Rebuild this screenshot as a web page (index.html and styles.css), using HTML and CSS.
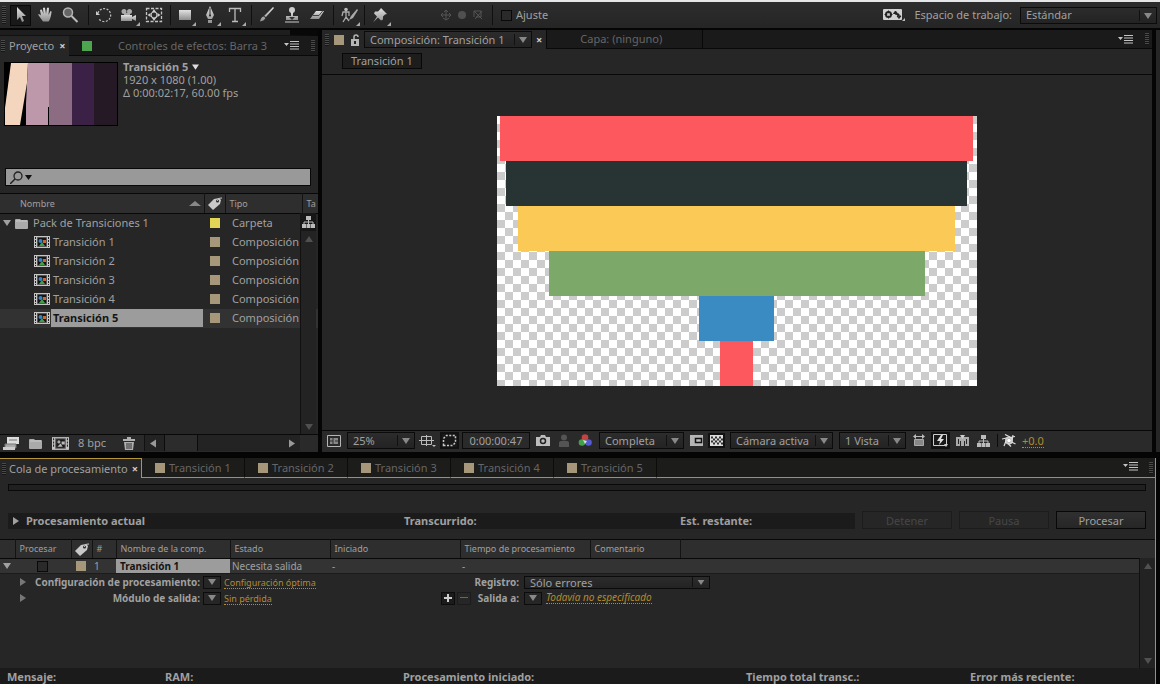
FILE: index.html
```html
<!DOCTYPE html>
<html lang="es">
<head>
<meta charset="utf-8">
<meta name="viewport" content="width=device-width, initial-scale=1">
<title>Transición 5</title>
<link rel="stylesheet" href="styles.css">
</head>
<body>
<svg class="defs" aria-hidden="true">
  <defs>
    <linearGradient id="steel" x1="0" y1="0" x2="0" y2="1"><stop offset="0" stop-color="#e2e2e2"/><stop offset="1" stop-color="#8e8e8e"/></linearGradient>
    <pattern id="checker" width="16" height="16" patternUnits="userSpaceOnUse"><rect width="16" height="16" fill="#fff"/><path d="M8 0h8v8H8zM0 8h8v8H0z" fill="#ccc"/></pattern>
  </defs>
  <symbol id="down" viewBox="0 0 8 6"><path d="M0 0h8L4 6z" fill="currentColor"/></symbol>
  <symbol id="up" viewBox="0 0 8 6"><path d="M0 6h8L4 0z" fill="currentColor"/></symbol>
  <symbol id="right" viewBox="0 0 6 8"><path d="M0 0v8l6-4z" fill="currentColor"/></symbol>
  <symbol id="left" viewBox="0 0 6 8"><path d="M6 0v8L0 4z" fill="currentColor"/></symbol>
  <symbol id="menu" viewBox="0 0 15 9"><path d="M0 2h5L2.500 5zM6 0h9v1H6zM6 2.500h9v1H6zM6 5h9v1H6zM6 7.500h9v1H6z" fill="#c4c4c4"/></symbol>
  <symbol id="tag" viewBox="0 0 15 13"><path d="M1 8 7 2l5-1 2 2-1 4-7 6z" fill="#c8c8c8"/><circle cx="10.500" cy="4" r="1.500" fill="#262626"/><path d="M10 4Q12 0 15 1" fill="none" stroke="#c8c8c8"/></symbol>
  <symbol id="tree" viewBox="0 0 13 12"><path d="M4 0h5v4H4zM0 8h4v4H0zM4.500 8h4v4h-4zM9 8h4v4H9z" fill="#bbb"/><path d="M6.500 4v4M2 8V6h9v2" fill="none" stroke="#bbb"/></symbol>
  <symbol id="folder" viewBox="0 0 14 11"><path d="M0 2q0-1 1-1h4l1 1h6q1 0 1 1v7q0 1-1 1H1q-1 0-1-1z" fill="#aaa"/><path d="M1 3h11" stroke="#ccc"/></symbol>
  <symbol id="comp" viewBox="0 0 16 12"><path d="M0 0h16v12H0z" fill="#c4c4c4"/><path d="M3.500 1.500h9v9h-9z" fill="#151515" stroke="#555"/><path d="M1 1h1v2H1zM1 4h1v2H1zM1 7h1v2H1zM1 10h1v1H1zM14 1h1v2h-1zM14 4h1v2h-1zM14 7h1v2h-1zM14 10h1v1h-1z" fill="#222"/><circle cx="6.500" cy="5" r="2" fill="#3b83c4"/><path d="M5 10l3-4 3 4z" fill="#43a047"/><path d="M9 4h3v3H9z" fill="#d0652e"/></symbol>
</svg>

<div class="app">
  <header class="toolbar">
    <span class="grip"></span>
    <div class="tools">
      <button class="tool on" aria-label="Selección"><svg viewBox="0 0 20 20"><path d="M7 2v13l3-3 2 5 2-1-2-5h4z" fill="url(#steel)"/></svg></button>
      <button class="tool" aria-label="Mano"><svg viewBox="0 0 20 20"><path d="M3 9.500q1.500-1 3 1L5 5q1.500-1 2 0l1.500 4L8 3q1.500-1 2 0l1 6 1-6q1.500-1 2 .500L13.500 10l2-4q1.500 0 1 1.500-1 7-3 9H8z" fill="url(#steel)"/></svg></button>
      <button class="tool" aria-label="Zoom"><svg viewBox="0 0 20 20"><circle cx="8" cy="7.500" r="4.500" fill="#666" stroke="#b5b5b5" stroke-width="1.500"/><path d="m11.500 11 6 6" stroke="#bbb" stroke-width="2"/></svg></button>
    </div>
    <div class="tools t2">
      <button class="tool" aria-label="Rotación"><svg viewBox="0 0 20 20"><path d="M4 8a6.500 6.500 0 1 1 1 6" fill="none" stroke="#bbb" stroke-width="1.300" stroke-dasharray="2 1.500"/><path d="M2 6v4h4z" fill="#ccc"/></svg></button>
      <button class="tool sub" aria-label="Cámara"><svg viewBox="0 0 20 20"><path d="M2 10h11v6H2zM13 12l4-2v6l-4-2z" fill="url(#steel)"/><circle cx="5" cy="6.500" r="2.500" fill="#aaa"/><circle cx="10.500" cy="6.500" r="2.500" fill="#aaa"/><path d="M5 9h6" stroke="#aaa" stroke-width="2"/></svg></button>
      <button class="tool" aria-label="Panorámica trasera"><svg viewBox="0 0 20 20"><rect x="2.500" y="3.500" width="15" height="13" fill="none" stroke="#c4c4c4" stroke-width="1.300" stroke-dasharray="3 1.500"/><circle cx="10" cy="10" r="3" fill="none" stroke="#ccc" stroke-width="1.200"/><path d="m10 4 2 3H8zM10 16l2-3H8zM3.500 10l3-2v4zM16.500 10l-3-2v4z" fill="#ccc"/></svg></button>
    </div>
    <div class="tools t3">
      <button class="tool sub" aria-label="Rectángulo"><svg viewBox="0 0 20 20"><path d="M4 5h12v10H4z" fill="url(#steel)"/></svg></button>
      <button class="tool sub" aria-label="Pluma"><svg viewBox="0 0 20 20"><path d="m10 1 4 9-2 4H8l-2-4zM8 15h4v3H8z" fill="url(#steel)"/><path d="M10 3v7" stroke="#333"/><circle cx="10" cy="10.500" r="1" fill="#222"/></svg></button>
      <button class="tool sub" aria-label="Texto"><svg viewBox="0 0 20 20"><path d="M4.500 7V3.500h11V7M10 3v13M7 16.500h6" fill="none" stroke="#bcbcbc" stroke-width="1.300"/></svg></button>
    </div>
    <div class="tools t4">
      <button class="tool" aria-label="Pincel"><svg viewBox="0 0 20 20"><path d="m17 3-8 9-2-1 9-9zM8.500 13l-2-1.500Q4 12 3 16.500 7 16 8.500 13z" fill="url(#steel)"/></svg></button>
      <button class="tool" aria-label="Tampón"><svg viewBox="0 0 20 20"><circle cx="10" cy="5" r="3" fill="#ccc"/><path d="M9 7h2v4h5v4H4v-4h5z" fill="url(#steel)"/><path d="M3 17h14" stroke="#ccc"/><path d="m10 15-3-3h6z" fill="#333"/></svg></button>
      <button class="tool" aria-label="Borrador"><svg viewBox="0 0 20 20"><path d="M9 6h8l-5 8H3z" fill="url(#steel)"/><path d="M6 10.500h6l4-5" fill="none" stroke="#444"/></svg></button>
    </div>
    <div class="tools t5">
      <button class="tool sub" aria-label="Pincel de rotoscopia"><svg viewBox="0 0 20 20"><circle cx="7" cy="4.500" r="1.800" fill="#bbb"/><path d="M7 6v6l-3 5M7 12l3 4M3 11l1-4h6v4" fill="none" stroke="#aaa" stroke-width="1.300"/><path d="m18 4-6 7-2 4 4-2 5-8z" fill="#aaa"/></svg></button>
    </div>
    <div class="tools t6">
      <button class="tool sub" aria-label="Posición libre"><svg viewBox="0 0 20 20"><path d="m11 3 6 6-2 .500-2 2v3l-2 1-3-3-5 5 4-6-3-3 1-2h3l2-2z" fill="url(#steel)"/></svg></button>
    </div>
    <div class="axes">
      <svg viewBox="0 0 12 12" width="12" height="12"><path d="M6 1v10M1 6h10M4 3l2-2 2 2M3 4 1 6l2 2M9 4l2 2-2 2M3 9l3 2 3-2" fill="none" stroke="#555"/></svg>
      <svg viewBox="0 0 12 12" width="12" height="12"><circle cx="6" cy="6" r="4" fill="#505050"/></svg>
      <svg viewBox="0 0 12 12" width="12" height="12"><path d="M2 2h7v6H4M2 2l8 8M10 2 3 10M2 2v6" fill="none" stroke="#555"/></svg>
    </div>
    <label class="snap"><input type="checkbox" class="tick">Ajuste</label>
    <div class="space">
      <svg class="reset" viewBox="0 0 23 14" width="23" height="14"><rect y="1" width="19" height="11" rx="1" fill="#d0d0d0"/><circle cx="5.500" cy="6.500" r="2.500" fill="none" stroke="#222" stroke-width="2"/><path d="M5.500 2.500v8M1.500 6.500h8" stroke="#222"/><circle cx="5.500" cy="6.500" r="1.300" fill="#d0d0d0"/><path d="M12.500 6.500V4M10.500 5.500l2-2.500 2 2.500zM12.500 6h3.500v3M14 8l2 2.500L18 8z" fill="#222" stroke="#222"/><path d="M22 10v3h-3z" fill="#bbb"/></svg>
      <label for="ws">Espacio de trabajo:</label>
      <span class="pick wide"><select id="ws"><option>Estándar</option></select><svg><use href="#down"/></svg></span>
    </div>
  </header>

  <main class="work">
    <section class="project">
      <div class="slider"></div>
      <nav class="tabs">
        <button class="tab now"><span class="grip"></span>Proyecto <b>×</b></button>
        <button class="tab fx"><i class="chip green"></i>Controles de efectos: Barra 3</button>
        <button class="more" aria-label="Menú del panel"><svg width="15" height="9"><use href="#menu"/></svg></button>
        <span class="grip end"></span>
      </nav>
      <div class="info">
        <svg class="thumb" viewBox="0 0 114 64"><path fill="#000" d="M0 0h114v64H0z"/><path fill="#f3d6bd" d="M7 1h17l-1 20-7 42H1V46z"/><path fill="#bd98ab" d="M24 1h21v62H22V42z"/><path fill="#8c6c83" d="M45 1h23v62H45z"/><path fill="#3a2145" d="M68 1h22v62H68z"/><path fill="#261926" d="M90 1h23v62H90z"/><path d="M44.500 45v18" stroke="#000"/></svg>
        <div class="meta"><strong>Transición 5 <svg width="7" height="6"><use href="#down"/></svg></strong><span>1920 x 1080 (1.00)</span><span>Δ 0:00:02:17, 60.00 fps</span></div>
      </div>
      <div class="search">
        <svg viewBox="0 0 22 13" width="22" height="13"><circle cx="8" cy="5" r="4" fill="none" stroke="#222" stroke-width="1.300"/><path d="m5 8-5 5" stroke="#222" stroke-width="1.500"/><path d="M15 4h7l-3.500 5z" fill="#111"/></svg>
        <input type="text" aria-label="Buscar">
      </div>
      <div class="list">
        <table class="files">
          <colgroup><col class="c-name"><col class="c-tag"><col class="c-type"><col class="c-size"></colgroup>
          <thead><tr><th class="first"><span class="sorted">Nombre<svg width="12" height="5" viewBox="0 0 12 5"><path d="M0 5h12L6 0z" fill="#888"/></svg></span></th><th class="mid"><svg width="15" height="13"><use href="#tag"/></svg></th><th>Tipo</th><th>Ta</th></tr></thead>
          <tbody>
            <tr><td class="root"><span class="cell"><svg width="8" height="6"><use href="#down"/></svg><svg width="14" height="11"><use href="#folder"/></svg>Pack de Transiciones 1</span></td><td class="mid"><i class="chip yellow"></i></td><td>Carpeta</td><td></td></tr>
            <tr><td class="leaf"><span class="cell"><svg width="16" height="12"><use href="#comp"/></svg>Transición 1</span></td><td class="mid"><i class="chip"></i></td><td>Composición</td><td></td></tr>
            <tr><td class="leaf"><span class="cell"><svg width="16" height="12"><use href="#comp"/></svg>Transición 2</span></td><td class="mid"><i class="chip"></i></td><td>Composición</td><td></td></tr>
            <tr><td class="leaf"><span class="cell"><svg width="16" height="12"><use href="#comp"/></svg>Transición 3</span></td><td class="mid"><i class="chip"></i></td><td>Composición</td><td></td></tr>
            <tr><td class="leaf"><span class="cell"><svg width="16" height="12"><use href="#comp"/></svg>Transición 4</span></td><td class="mid"><i class="chip"></i></td><td>Composición</td><td></td></tr>
            <tr class="picked"><td class="leaf"><span class="cell"><svg width="16" height="12"><use href="#comp"/></svg><b>Transición 5</b></span></td><td class="mid"><i class="chip"></i></td><td>Composición</td><td></td></tr>
          </tbody>
        </table>
        <div class="side">
          <button class="flow" aria-label="Diagrama"><svg width="13" height="12"><use href="#tree"/></svg></button>
          <div class="vbar"><svg width="10" height="6"><use href="#up"/></svg><svg width="10" height="6"><use href="#down"/></svg></div>
        </div>
      </div>
      <footer class="pfoot">
        <button aria-label="Interpretar material"><svg width="17" height="13" viewBox="0 0 17 13"><path d="M4 0h12v7H4z" fill="#ddd"/><path d="M6 3h8M2 7h11v4H2z" stroke="#777" fill="#aaa"/><path d="M0 10h12v3H0z" fill="#ccc"/></svg></button>
        <button aria-label="Nueva carpeta"><svg width="14" height="11"><use href="#folder"/></svg></button>
        <button aria-label="Nueva composición"><svg width="17" height="13" viewBox="0 0 16 12"><path d="M0 0h16v12H0z" fill="#c4c4c4"/><path d="M3.500 1.500h9v9h-9z" fill="#181818" stroke="#666"/><path d="M1 1h1v2H1zM1 4h1v2H1zM1 7h1v2H1zM14 1h1v2h-1zM14 4h1v2h-1zM14 7h1v2h-1z" fill="#222"/><circle cx="6.500" cy="4.500" r="1.500" fill="#aaa"/><path d="M9 4h3v3H9zM5 9l3-3 2 3z" fill="#bbb"/></svg></button>
        <button class="bpc">8 bpc</button>
        <button aria-label="Eliminar"><svg width="12" height="13" viewBox="0 0 12 13"><path d="M0 2h12v2H0zM4 0h4v2H4zM1 5h10l-1 8H2z" fill="#b0b0b0"/><path d="M4 6v6M6 6v6M8 6v6" stroke="#333"/></svg></button>
        <div class="hbar"><svg width="6" height="9"><use href="#left"/></svg><span></span><svg width="6" height="9"><use href="#right"/></svg></div>
      </footer>
    </section>

    <section class="viewer">
      <nav class="tabs">
        <div class="comptab"><span class="grip"></span><i class="chip"></i>
          <svg width="10" height="12" viewBox="0 0 10 12"><path d="M1 5h8v7H1z" fill="#b5b5b5"/><path d="M4 5V3q0-2 2-2t2 2" fill="none" stroke="#b5b5b5" stroke-width="1.500"/><path d="M5 7v3" stroke="#222" stroke-width="2"/></svg>
          <span class="pick"><select aria-label="Composición"><option>Composición: Transición 1</option></select><svg><use href="#down"/></svg></span><b>×</b>
        </div>
        <button class="tab layer">Capa: (ninguno)</button>
        <button class="more" aria-label="Menú del panel"><svg width="15" height="9"><use href="#menu"/></svg></button>
        <span class="grip end"></span>
      </nav>
      <div class="crumbs"><button>Transición 1</button></div>
      <div class="stage">
        <svg class="canvas" viewBox="0 0 480 270">
          <rect width="480" height="270" fill="url(#checker)"/>
          <rect x="3" width="473" height="45" fill="#fe585f"/>
          <rect x="9" y="45" width="461" height="45" fill="#273433"/>
          <rect x="21" y="90" width="437" height="45" fill="#fbca56"/>
          <rect x="52" y="135" width="376" height="45" fill="#7ca86a"/>
          <rect x="202" y="180" width="75" height="45" fill="#3a8bc2"/>
          <rect x="223" y="225" width="33" height="45" fill="#fe585f"/>
        </svg>
      </div>
      <footer class="vfoot">
        <button aria-label="Previsualización"><svg width="14" height="12" viewBox="0 0 14 12"><path d="M.5.5h13v11H.5z" fill="none" stroke="#b5b5b5"/><path d="M3 3h8v6H3z" fill="#888"/><path d="M6 3v6M8 6h3M3 6h3" stroke="#333"/></svg></button>
        <span class="pick zoom"><select aria-label="Ampliación"><option>25%</option></select><svg><use href="#down"/></svg></span>
        <button aria-label="Cuadrícula"><svg width="17" height="13" viewBox="0 0 17 13"><path d="M2.500 2.500h10v8h-10zM7.500 1v11M0 6.500h15" fill="none" stroke="#bbb"/><path d="M13 11h4l-2 2z" fill="#bbb"/></svg></button>
        <button class="inset" aria-label="Máscara"><svg width="15" height="13" viewBox="0 0 15 13"><path d="M1.500 11.500v-7l3-3h9v7l-3 3z" fill="none" stroke="#c8c8c8" stroke-width="1.500" stroke-dasharray="2 1.500"/></svg></button>
        <button class="time">0:00:00:47</button>
        <button aria-label="Instantánea"><svg width="14" height="11" viewBox="0 0 14 11"><path d="M0 2h4l1-2h4l1 2h4v9H0z" fill="#bdbdbd"/><circle cx="7" cy="6" r="2.500" fill="none" stroke="#222" stroke-width="1.500"/></svg></button>
        <button class="ghost" aria-label="Mostrar instantánea"><svg width="12" height="13" viewBox="0 0 12 13"><circle cx="6" cy="3.500" r="3" fill="#545454"/><path d="M1 13V9q0-2 2-2h6q2 0 2 2v4z" fill="#545454"/></svg></button>
        <button aria-label="Canales"><svg width="15" height="13" viewBox="0 0 15 13"><circle cx="7" cy="3.500" r="3.300" fill="#c3443e"/><circle cx="4" cy="8.500" r="3.300" fill="#43a14a"/><circle cx="10.500" cy="8.500" r="3.300" fill="#565acb"/><path d="m5 6 4 1-2 3z" fill="#ddd"/></svg></button>
        <span class="pick res"><select aria-label="Resolución"><option>Completa</option></select><svg><use href="#down"/></svg></span>
        <button aria-label="Región de interés"><svg width="13" height="11" viewBox="0 0 13 11"><path d="M0 0h13v11H0z" fill="#b5b5b5"/><path d="M5.500 3.500h6v4h-6z" fill="#bbb" stroke="#111" stroke-width="1.500"/></svg></button>
        <button class="inset alpha" aria-label="Transparencia"><svg width="13" height="11" viewBox="0 0 13 11"><path d="M0 0h13v11H0z" fill="#ddd"/><path d="M1 2.500h12M1 6.500h12" stroke="#333" stroke-width="2" stroke-dasharray="2 2"/><path d="M3 4.500h10M3 8.500h10" stroke="#333" stroke-width="2" stroke-dasharray="2 2"/></svg></button>
        <span class="pick cam"><select aria-label="Vista 3D"><option>Cámara activa</option></select><svg><use href="#down"/></svg></span>
        <span class="pick view"><select aria-label="Vistas"><option>1 Vista</option></select><svg><use href="#down"/></svg></span>
        <button class="tail" aria-label="Proporción de píxeles"><svg width="12" height="13" viewBox="0 0 12 13"><path d="M1.500 5.500h9v6h-9z" fill="#888" stroke="#aaa"/><path d="M1 2.500h10" stroke="#bbb"/><path d="M0 2.500 3 0v5zM12 2.500 9 0v5z" fill="#bbb"/></svg></button>
        <button class="inset tail" aria-label="Previsualizaciones rápidas"><svg width="15" height="13" viewBox="0 0 15 13"><path d="M.5.5h13v11H.5z" fill="none" stroke="#ccc"/><path d="M8 1 4 7h3l-1 4 5-6H8l2-4z" fill="#ddd"/><path d="M11 10h4l-2 3z" fill="#ccc"/></svg></button>
        <button class="tail" aria-label="Línea de tiempo"><svg width="13" height="12" viewBox="0 0 13 12"><path d="M0 2h13v9H0z" fill="#aaa"/><path d="M2.500 4v5M4.500 6v5M8.500 6v5M10.500 4v5" stroke="#262626"/><path d="M4 0h5L6.500 4z" fill="#ccc"/></svg></button>
        <button class="tail" aria-label="Diagrama"><svg width="13" height="12"><use href="#tree"/></svg></button>
        <button class="expo" aria-label="Exposición"><svg width="14" height="13" viewBox="0 0 14 13"><circle cx="7" cy="6.500" r="3" fill="none" stroke="#ccc" stroke-width="2"/><path d="M8 3 3 .500M10 6l1-5M9.500 8l4 2M6 9.500l3 3M4 7l-2 5M4.500 4 0 5M8 3.500l5-1" stroke="#ddd" stroke-width="1.200"/><circle cx="7" cy="6.500" r="2" fill="#fff"/></svg></button>
        <button class="gold num">+0.0</button>
      </footer>
    </section>
    <aside class="edge"></aside>
  </main>

  <section class="queue">
    <nav class="qtabs">
      <button class="qtab now"><span class="grip"></span>Cola de procesamiento <b>×</b></button>
      <button class="qtab"><i class="chip"></i>Transición 1</button>
      <button class="qtab"><i class="chip"></i>Transición 2</button>
      <button class="qtab"><i class="chip"></i>Transición 3</button>
      <button class="qtab"><i class="chip"></i>Transición 4</button>
      <button class="qtab"><i class="chip"></i>Transición 5</button>
      <div class="rest"><button class="more" aria-label="Menú del panel"><svg width="15" height="9"><use href="#menu"/></svg></button><span class="grip end"></span></div>
    </nav>
    <div class="progress"></div>
    <div class="run">
      <div class="status"><strong><svg width="6" height="8"><use href="#right"/></svg>Procesamiento actual</strong><strong>Transcurrido:</strong><strong>Est. restante:</strong></div>
      <button disabled>Detener</button><button disabled>Pausa</button><button>Procesar</button>
    </div>
    <div class="jobs">
      <table class="render">
        <colgroup><col class="q0"><col class="q1"><col class="q2"><col class="q3"><col class="q4"><col class="q5"><col class="q6"><col class="q7"><col class="q8"><col></colgroup>
        <thead><tr><th></th><th>Procesar</th><th class="mid"><svg width="15" height="13"><use href="#tag"/></svg></th><th>#</th><th>Nombre de la comp.</th><th>Estado</th><th>Iniciado</th><th>Tiempo de procesamiento</th><th>Comentario</th><th></th></tr></thead>
        <tbody>
          <tr class="job"><td class="mid"><svg width="8" height="6"><use href="#down"/></svg></td><td class="mid"><input type="checkbox" class="tick" aria-label="Procesar Transición 1"></td><td class="mid"><i class="chip"></i></td><td class="idx">1</td><td class="name"><b>Transición 1</b></td><td class="state">Necesita salida</td><td class="state">-</td><td class="state">-</td><td></td><td></td></tr>
          <tr><td colspan="10"><div class="opts"><svg width="6" height="8"><use href="#right"/></svg><strong>Configuración de procesamiento:</strong><button class="drop" aria-label="Elegir configuración"><svg width="8" height="6"><use href="#down"/></svg></button><span><a href="#" class="gold">Configuración óptima</a></span><label class="lab" for="log">Registro:</label><span class="pick log"><select id="log"><option>Sólo errores</option></select><svg><use href="#down"/></svg></span></div></td></tr>
          <tr><td colspan="10"><div class="opts"><svg width="6" height="8"><use href="#right"/></svg><strong>Módulo de salida:</strong><button class="drop" aria-label="Elegir módulo"><svg width="8" height="6"><use href="#down"/></svg></button><span><a href="#" class="gold">Sin pérdida</a></span><span class="lab"><button class="sq" aria-label="Añadir"><svg width="8" height="8"><path d="M3 0h2v8H3zM0 3h8v2H0z" fill="#ccc"/></svg></button><button class="sq off" aria-label="Quitar"><svg width="8" height="8"><path d="M0 3h8v1H0z" fill="#666"/></svg></button>Salida a:</span><span class="out"><button class="drop" aria-label="Elegir salida"><svg width="8" height="6"><use href="#down"/></svg></button><a href="#" class="gold"><em>Todavía no especificado</em></a></span></div></td></tr>
        </tbody>
      </table>
      <div class="vbar"><svg width="10" height="6"><use href="#up"/></svg><svg width="10" height="6"><use href="#down"/></svg></div>
    </div>
    <footer class="sums"><strong>Mensaje:</strong><strong>RAM:</strong><strong>Procesamiento iniciado:</strong><strong>Tiempo total transc.:</strong><strong>Error más reciente:</strong></footer>
  </section>
</div>
</body>
</html>
```
FILE: styles.css
```css
* { box-sizing: border-box; }
body { margin: 0; background: #050505; color: #a0a0a0; font: 11px/14px "Noto Sans", "Open Sans", sans-serif; }
button, select, input { font: inherit; color: inherit; margin: 0; padding: 0; border: 0; background: none; border-radius: 0; }
button { white-space: nowrap; }
svg { display: block; flex: none; }
strong, th { font-size: 11px; }
table { border-collapse: collapse; table-layout: fixed; width: 100%; }
th, td { padding: 0; text-align: left; }
.defs { position: absolute; width: 0; height: 0; }
.app { display: flex; flex-direction: column; min-height: 100vh; }

/* Shared parts */
.grip { width: 4px; height: 12px; flex: none; background: repeating-linear-gradient(#4a4a4a 0 1px, #161616 1px 2px); }
.chip { display: inline-block; width: 10px; height: 10px; flex: none; background: #a6977b; }
.chip.green { background: #4da64f; }
.chip.yellow { background: #e3d556; }
.tick { appearance: none; width: 11px; height: 11px; border: 1px solid #090909; background: #2a2a2a; display: inline-block; }
.pick { display: grid; grid-template-columns: minmax(0, 1fr) 17px; border: 1px solid #0b0b0b; background: linear-gradient(#2c2c2c, #232323); height: 17px; align-items: center; }
.pick select { grid-area: 1 / 1 / 2 / 3; appearance: none; width: 100%; height: 15px; padding: 0 20px 0 5px; outline: 0; line-height: 14px; }
.pick svg { grid-area: 1 / 2; width: 17px; height: 11px; padding: 3px 4px 2px; border-left: 1px solid #111; color: #888; pointer-events: none; }
.gold { color: #b58a2c; border-bottom: 1px dotted #b58a2c; text-decoration: none; }
.mid { text-align: center; }
.mid svg, .mid .chip, .mid .tick { display: block; margin: 0 auto; }
.more { margin-left: auto; align-self: center; }
.end { align-self: center; margin: 0 3px 0 12px; }
.vbar { display: flex; flex-direction: column; justify-content: space-between; align-items: center; color: #505050; background: #232323; border-left: 1px solid #111; padding: 5px 0 4px; }

/* Toolbar */
.toolbar { display: flex; align-items: center; height: 28px; border-top: 2px solid #e4e6e8; background: linear-gradient(#2d2d2d, #252525); padding: 0 3px 0 2px; }
.toolbar .grip { height: 18px; }
.tools { display: flex; align-items: center; gap: 4px; height: 20px; padding: 0 7px 0 4px; border-right: 1px solid #101010; }
.tool { width: 21px; height: 21px; position: relative; }
.tool svg { width: 20px; height: 20px; }
.tool.on { background: #191919; box-shadow: inset 0 0 0 1px #090909; }
.sub::after { content: ""; position: absolute; right: 0; bottom: 0; border: 2px solid transparent; border-right-color: #aaa; border-bottom-color: #aaa; }
.t2 { padding: 0 5px; }
.t3 { padding: 0 5px 0 4px; }
.t4 { padding: 0 5px; }
.t5 { padding: 0 4px 0 5px; }
.t6 { border: 0; padding: 0 4px 0 5px; }
.axes { display: flex; gap: 4px; padding: 0 8px 0 45px; height: 20px; align-items: center; border-right: 1px solid #101010; }
.snap { display: flex; align-items: center; gap: 4px; padding-left: 8px; }
.space { display: flex; align-items: center; gap: 8px; margin-left: auto; }
.pick.wide { width: 137px; }

/* Workspace */
.work { flex: 1 0 auto; display: grid; grid-template-columns: 318px minmax(0, 1fr) 4px; column-gap: 4px; padding: 2px 0 6px; }
.project, .viewer { display: flex; flex-direction: column; background: #262626; min-width: 0; }
.edge { background: #262626; }
.slider { height: 6px; border-right: 28px solid #080808; background: #1e1e1e; border-bottom: 1px solid #111; }
.tabs { display: flex; height: 20px; background: #1a1a1a; border-bottom: 1px solid #090909; color: #666; }
.tabs b, .qtabs b { color: #ccc; }
.tab { display: flex; align-items: center; }
.tab.now { gap: 5px; width: 69px; padding-left: 1px; margin-bottom: -1px; background: #262626; color: #a0a0a0; }
.tab.now .grip { margin-right: -1px; }
.fx { gap: 26px; padding-left: 13px; }
.project .end { margin-left: 12px; }
.info { display: flex; gap: 5px; padding: 4px 4px 0; height: 112px; }
.thumb { width: 114px; height: 64px; margin-top: 2px; }
.meta { display: flex; flex-direction: column; line-height: 13px; }
.meta strong { display: flex; align-items: center; gap: 4px; }
.meta strong svg { color: #ddd; }
.search { display: flex; align-items: center; gap: 4px; margin: 0 7px 7px 5px; padding-left: 4px; height: 18px; border: 1px solid #080808; background: #999; }
.search input { flex: 1; min-width: 0; color: #111; outline: 0; }
.list { flex: 1; display: grid; grid-template: 20px 1fr / minmax(0, 1fr) 18px; background: #262626; min-height: 240px; }
.files { grid-area: 1 / 1 / 3 / 3; align-self: start; }
.c-name { width: 204px; } .c-tag { width: 21px; } .c-type { width: 77px; }
thead th { height: 19px; border-top: 1px solid #080808; border-bottom: 1px solid #080808; background: #2e2e2e; font-weight: 400; font-size: 9px; line-height: 12px; padding-left: 4px; border-right: 1px solid #131313; white-space: nowrap; }
thead th:last-child { border-right: 0; }
thead th.mid { padding: 0; }
.files thead th { height: 20px; }
.files th.first { padding-left: 20px; }
.sorted { display: flex; align-items: center; justify-content: space-between; padding-right: 3px; }
.files td { height: 19px; padding-left: 7px; white-space: nowrap; overflow: hidden; }
.files td.mid { padding: 0; }
.files td.root { padding-left: 3px; }
.files td.leaf { padding-left: 34px; }
.cell { display: flex; align-items: center; gap: 4px; height: 18px; }
.leaf .cell { gap: 1px; padding-right: 1px; text-indent: 2px; }
.leaf b { flex: 1; background: #9c9c9c; color: #141414; padding: 2px; text-indent: 0; }
.picked { background: #323232; }
.side { grid-area: 2 / 2; display: flex; flex-direction: column; background: #232323; margin-right: 2px; }
.flow { height: 18px; display: grid; place-items: center; background: #161616; }
.side .vbar { flex: 1; }
.pfoot { display: flex; align-items: center; height: 18px; gap: 9px; padding: 0 0 1px 3px; border-top: 1px solid #090909; background: #2a2a2a; }
.bpc { margin-right: 8px; }
.hbar { flex: 1; display: flex; align-items: center; align-self: stretch; border-left: 1px solid #111; margin-right: 18px; padding: 0 5px; gap: 8px; color: #999; background: #232323; }
.hbar span { width: 34px; align-self: stretch; border: solid #0c0c0c; border-width: 0 1px; background: #2c2c2c; }
.hbar svg:last-child { margin-left: auto; }

/* Composition viewer */
.viewer .tabs { height: 19px; }
.comptab { display: flex; align-items: center; gap: 6px; padding: 0 4px 0 3px; background: #262626; margin-bottom: -1px; color: #a0a0a0; }
.comptab .grip { margin-right: -1px; }
.comptab .pick { width: 168px; margin-left: -2px; }
.comptab b { margin-left: -2px; }
.layer { padding: 0 40px 0 33px; border: solid #080808; border-width: 0 1px; }
.crumbs { padding: 4px 20px; height: 26px; border-bottom: 1px solid #080808; }
.crumbs button { height: 16px; padding: 0 8px; border: 1px solid #080808; background: #1d1d1d; line-height: 14px; }
.stage { flex: 1; display: grid; place-items: center; min-height: 290px; padding-bottom: 4px; }
.canvas { width: 480px; max-width: 100%; height: auto; }
.vfoot { display: flex; align-items: center; gap: 6px; height: 22px; padding: 0 0 2px 5px; border-top: 1px solid #080808; background: #2a2a2a; }
.vfoot button { display: grid; place-items: center; }
.vfoot .inset { background: #181818; box-shadow: 0 0 0 2px #111; }
.vfoot .time { width: 68px; height: 17px; border: 1px solid #0b0b0b; margin-left: -1px; }
.zoom { width: 68px; margin-right: -2px; }
.res { width: 85px; }
.cam { width: 103px; }
.view { width: 67px; }
.vfoot .ghost { margin: 0 2px; }
.vfoot .alpha { margin: 0 1px; }
.vfoot .tail { margin-left: 1px; margin-right: 1px; }
.vfoot .expo { border-left: 1px solid #0c0c0c; padding-left: 4px; }
.vfoot .num { height: 14px; line-height: 13px; }

/* Render queue */
.queue { flex: none; display: flex; flex-direction: column; margin-right: 4px; background: #262626; border-right: 1px solid #b09040; }
.qtabs { display: flex; height: 20px; color: #666; background: #1c1c1b; }
.qtab { display: flex; align-items: center; gap: 4px; width: 103px; padding-left: 13px; border-right: 1px solid #0c0c0c; border-bottom: 1px solid #c9804c; }
.qtab.now { width: 142px; gap: 4px; padding-left: 2px; border: solid #b5963c; border-width: 1px 1px 0 0; background: #262626; color: #a0a0a0; }
.qtab.now .grip { margin-right: -1px; }
.rest { flex: 1; display: flex; border-bottom: 1px solid #c9804c; }
.rest .more { margin-bottom: 2px; }
.rest .end { margin: 0 2px 0 11px; }
.progress { height: 7px; margin: 6px 9px 20px 8px; border: 1px solid #090909; background: #202020; }
.run { display: flex; gap: 7px; padding: 0 9px 10px 8px; height: 28px; }
.run button { width: 90px; height: 18px; border: 1px solid #080808; line-height: 15px; background: linear-gradient(#303030, #262626); }
.run button:disabled { color: #474747; border-color: #1c1c1c; background: none; }
.status { flex: 1; display: grid; grid-template-columns: 391px 276px 1fr; align-items: center; background: #1b1b1b; margin-top: 2px; padding-left: 5px; }
.status strong { display: flex; align-items: center; gap: 7px; }
.jobs { display: grid; grid-template: 19px minmax(110px, 1fr) / minmax(0, 1fr) 16px; }
.render { grid-area: 1 / 1 / 3 / 3; align-self: start; }
.jobs .vbar { grid-area: 2 / 2; }
.q0 { width: 15px; } .q1 { width: 56px; } .q2 { width: 21px; } .q3 { width: 24px; } .q4 { width: 114px; }
.q5 { width: 100px; } .q6 { width: 130px; } .q7 { width: 130px; } .q8 { width: 90px; }
.job { background: #333; border-bottom: 1px solid #1b1b1b; }
.job td { height: 15px; font-size: 10px; line-height: 14px; }
.job td.mid { padding-right: 2px; }
.job .name { background: #9c9c9c; color: #141414; padding-left: 4px; }
.job .idx, .job .state { padding-left: 2px; }
.opts { display: grid; grid-template-columns: 12px 165px 18px 214px 78px 1fr; column-gap: 3px; align-items: center; height: 16px; padding-left: 20px; font-size: 10px; }
.opts strong, .lab { font-size: 10px; font-weight: 700; text-align: right; white-space: nowrap; }
.opts > svg { color: #777; }
.lab { display: flex; justify-content: flex-end; align-items: center; gap: 2px; }
.lab .off { margin-right: 5px; }
.drop, .sq { width: 18px; height: 13px; border: 1px solid #0c0c0c; display: grid; place-items: center; color: #888; }
.sq { width: 14px; background: #1b1b1b; }
.sq.off { border-color: #1c1c1c; background: none; }
.opts .gold { display: inline-block; line-height: 11px; font-size: 9px; }
.opts .out .gold { font-size: 10px; }
.out { display: flex; align-items: center; gap: 4px; padding-left: 2px; }
.log { width: 186px; height: 13px; margin-left: 2px; font-size: 11px; }
.log select { height: 11px; line-height: 11px; padding-left: 5px; }
.log svg { height: 10px; }
.sums { display: grid; grid-template-columns: 158px 238px 343px 224px 1fr; padding: 2px 0 0 7px; background: #1b1b1b; }
```
